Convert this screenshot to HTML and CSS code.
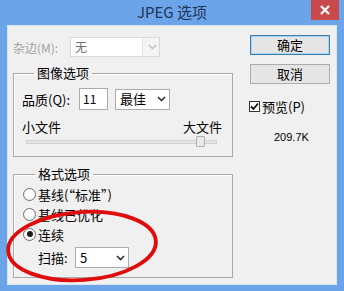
FILE: index.html
```html
<!DOCTYPE html>
<html lang="zh-CN">
<head>
<meta charset="utf-8">
<title>JPEG 选项</title>
<link rel="stylesheet" href="styles.css">
</head>
<body>
<div class="window">
  <div class="titlebar">
    <span class="title">JPEG 选项</span>
    <span class="close">
      <svg width="10" height="10" viewBox="0 0 10 10"><path d="M1 1L9 9M9 1L1 9" stroke="#fff" stroke-width="2.2" fill="none"/></svg>
    </span>
  </div>
  <div class="client">
    <div class="left">
      <div class="matte-row">
        <span class="disabled-label">杂边(M):</span>
        <span class="combo combo-disabled">
          <span class="combo-text">无</span>
          <span class="combo-arrow">
            <svg width="9" height="6" viewBox="0 0 9 6"><path d="M1 1L4.5 4.5L8 1" stroke="#c4c4c4" stroke-width="1.6" fill="none"/></svg>
          </span>
        </span>
      </div>

      <fieldset class="group group-image">
        <legend>图像选项</legend>
        <div class="quality-row">
          <span class="label">品质(Q):</span>
          <span class="textbox">11</span>
          <span class="combo combo-quality">
            <span class="combo-text">最佳</span>
            <span class="combo-arrow">
              <svg width="9" height="6" viewBox="0 0 9 6"><path d="M1 1L4.5 4.5L8 1" stroke="#333" stroke-width="1.6" fill="none"/></svg>
            </span>
          </span>
        </div>
        <div class="size-row">
          <span>小文件</span>
          <span>大文件</span>
        </div>
        <div class="slider">
          <span class="track"></span>
          <span class="thumb"></span>
        </div>
      </fieldset>

      <fieldset class="group group-format">
        <legend>格式选项</legend>
        <div class="radio-row"><span class="radio"></span><span>基线(“标准”)</span></div>
        <div class="radio-row"><span class="radio"></span><span>基线已优化</span></div>
        <div class="radio-row"><span class="radio checked"></span><span>连续</span></div>
        <div class="scan-row">
          <span class="label">扫描:</span>
          <span class="combo combo-scan">
            <span class="combo-text">5</span>
            <span class="combo-arrow">
              <svg width="9" height="6" viewBox="0 0 9 6"><path d="M1 1L4.5 4.5L8 1" stroke="#333" stroke-width="1.6" fill="none"/></svg>
            </span>
          </span>
        </div>
      </fieldset>
    </div>

    <div class="right">
      <button class="btn btn-default">确定</button>
      <button class="btn">取消</button>
      <div class="check-row">
        <span class="checkbox">
          <svg width="9" height="9" viewBox="0 0 9 9"><path d="M1 4.5L3.5 7L8 1.5" stroke="#111" stroke-width="1.8" fill="none"/></svg>
        </span>
        <span>预览(P)</span>
      </div>
      <div class="filesize">209.7K</div>
    </div>

    <svg class="annotation" width="164" height="84" viewBox="0 0 164 84">
      <ellipse cx="79" cy="40" rx="74" ry="34" transform="rotate(-4 79 40)" stroke="#e00c0c" stroke-width="3.8" fill="none"/>
    </svg>
  </div>
</div>
</body>
</html>
```

FILE: styles.css
```css
html, body {
  margin: 0;
  padding: 0;
  background: #6ba4e9;
}

body {
  font-family: "Noto Sans CJK SC", "Liberation Sans", sans-serif;
  font-size: 12px;
  color: #000;
}

.window {
  width: 344px;
  height: 291px;
  background: #6ba4e9;
  display: flex;
  flex-direction: column;
}

.titlebar {
  height: 25px;
  position: relative;
  display: flex;
  align-items: center;
  justify-content: center;
}

.title {
  font-size: 15px;
  color: #1f3554;
  line-height: 20px;
  margin-top: -2px;
}

.close {
  position: absolute;
  top: 0;
  right: 5px;
  width: 28px;
  height: 20px;
  background: #c94a4a;
  display: flex;
  align-items: center;
  justify-content: center;
}

.client {
  position: relative;
  margin: 0 7px;
  height: 258px;
  background: #f0f0f0;
  border: 1px solid #d9e6f5;
  display: flex;
  padding: 0 0 0 5px;
  gap: 17px;
}

.left {
  width: 220px;
  display: flex;
  flex-direction: column;
}

.matte-row {
  display: flex;
  align-items: center;
  margin-top: 11px;
  height: 20px;
}

.disabled-label {
  color: #a3a3a3;
  width: 57px;
}

.combo {
  display: flex;
  align-items: center;
  background: #fff;
  border: 1px solid #acacac;
  box-sizing: border-box;
  height: 21px;
}

.combo-text {
  flex: 1;
  padding-left: 4px;
  line-height: 18px;
}

.combo-arrow {
  width: 16px;
  height: 100%;
  display: flex;
  align-items: center;
  justify-content: center;
}

.combo-disabled {
  width: 90px;
  height: 20px;
  border-color: #d9d9d9;
  background: #f4f4f4;
}

.combo-disabled .combo-text {
  background: #fff;
  border-right: 1px solid #e3e3e3;
  height: 100%;
  color: #707070;
  margin-right: 2px;
}

.combo-disabled .combo-arrow {
  width: 14px;
}

.group {
  margin: 0;
  border: 1px solid #a8a8a8;
  box-shadow: inset 1px 1px 0 #fff;
  padding: 0 0 0 8px;
  min-width: 0;
}

.group legend {
  padding: 0 3px;
  margin-left: 12px;
  line-height: 16px;
  font-size: 13px;
}

.group-image {
  margin-top: 8px;
  height: 92px;
  box-sizing: border-box;
}

.quality-row {
  display: flex;
  align-items: center;
  margin-top: 7px;
  height: 22px;
}

.label {
  font-size: 13px;
}

.quality-row .label {
  width: 57px;
}

.textbox {
  width: 29px;
  height: 22px;
  box-sizing: border-box;
  border: 1px solid #acacac;
  background: #fff;
  padding-left: 3px;
  line-height: 20px;
}

.combo-quality {
  width: 55px;
  margin-left: 7px;
}

.combo-quality .combo-text {
  font-size: 13px;
}

.size-row {
  display: flex;
  justify-content: space-between;
  margin-top: 9px;
  line-height: 16px;
  padding-right: 10px;
  font-size: 13px;
}

.slider {
  position: relative;
  height: 14px;
  margin-left: 4px;
  margin-right: 15px;
}

.track {
  position: absolute;
  left: 0;
  right: 0;
  top: 5px;
  height: 2px;
  background: #e6e6e6;
  border: 1px solid #d2d2d2;
}

.thumb {
  position: absolute;
  left: 170px;
  top: 1px;
  width: 9px;
  height: 11px;
  box-sizing: border-box;
  background: #eaeaea;
  border: 1px solid #b0b0b0;
  border-radius: 1px;
}

.group-format {
  margin-top: 9px;
  height: 112px;
  box-sizing: border-box;
  padding-left: 9px;
}

.radio-row {
  display: flex;
  align-items: center;
  height: 20px;
  gap: 2px;
  font-size: 13px;
}

.radio-row:first-of-type {
  margin-top: 2px;
}

.radio {
  width: 13px;
  height: 13px;
  box-sizing: border-box;
  border-radius: 50%;
  border: 1px solid #6f6f6f;
  background: radial-gradient(circle at 50% 40%, #fff 40%, #e8e8e8 100%);
  display: flex;
  align-items: center;
  justify-content: center;
}

.radio.checked::after {
  content: "";
  width: 6px;
  height: 6px;
  border-radius: 50%;
  background: #1a1a1a;
}

.scan-row {
  display: flex;
  align-items: center;
  margin-top: 3px;
  padding-left: 15px;
}

.scan-row .label {
  width: 37px;
}

.combo-scan {
  width: 54px;
  height: 21px;
}

.combo-scan .combo-text {
  font-size: 13px;
}

.right {
  width: 80px;
  display: flex;
  flex-direction: column;
}

.btn {
  font-family: inherit;
  font-size: 13px;
  height: 20px;
  width: 80px;
  padding: 0;
  line-height: 16px;
  background: #e5e5e5;
  border: 1px solid #acacac;
  color: #000;
}

.btn-default {
  margin-top: 9px;
  border-color: #3c7fb1;
  box-shadow: inset 0 0 0 1px #a6d4f2;
}

.btn + .btn {
  margin-top: 9px;
}

.check-row {
  display: flex;
  align-items: center;
  gap: 2px;
  margin-top: 14px;
  margin-left: -1px;
  height: 16px;
  font-size: 13px;
}

.checkbox {
  width: 11px;
  height: 11px;
  box-sizing: border-box;
  border: 1px solid #333;
  background: #fff;
  display: flex;
  align-items: center;
  justify-content: center;
}

.filesize {
  margin-top: 16px;
  padding-left: 24px;
  font-family: "Liberation Sans", sans-serif;
  font-size: 11px;
  line-height: 14px;
}

.annotation {
  position: absolute;
  left: -5px;
  top: 180px;
  pointer-events: none;
}
```
